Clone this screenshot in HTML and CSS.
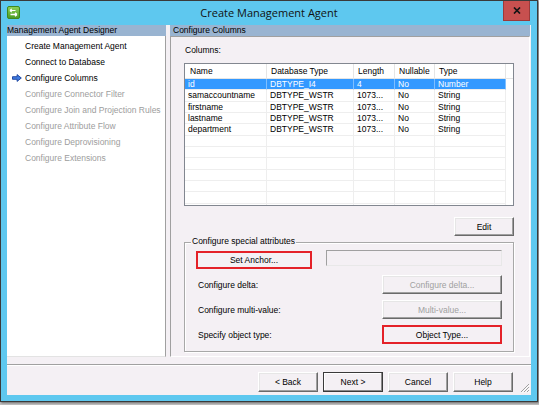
FILE: index.html
```html
<!DOCTYPE html>
<html>
<head>
<meta charset="utf-8">
<title>Create Management Agent</title>
<link rel="stylesheet" href="styles.css">
</head>
<body>
<div class="window">
  <div class="titlebar">
    <svg class="app-icon" width="13" height="13" viewBox="0 0 13 13">
      <defs><linearGradient id="ag" x1="0" y1="0" x2="0" y2="1"><stop offset="0" stop-color="#8fd35c"/><stop offset="1" stop-color="#4a9a23"/></linearGradient></defs>
      <rect x=".5" y=".5" width="12" height="12" rx="1.5" fill="url(#ag)" stroke="#3f8a1e"/>
      <path d="M3 4.5h5.5M3 4.5l1.8-1.6M3 4.5l1.8 1.6" stroke="#fff" stroke-width="1.2" fill="none"/>
      <path d="M3.5 8.5h6.5M10 8.5l-2-1.8M10 8.5l-2 1.8" stroke="#fff" stroke-width="1.4" fill="none"/>
    </svg>
    <div class="title">Create Management Agent</div>
    <div class="close">
      <svg width="8" height="7" viewBox="0 0 8 7"><path d="M1 .5l6 6M7 .5l-6 6" stroke="#141414" stroke-width="1.7"/></svg>
    </div>
  </div>
  <div class="client">
    <div class="main">
      <div class="left">
        <div class="band">Management Agent Designer</div>
        <ul class="steps">
          <li class="step"><span class="marker"></span>Create Management Agent</li>
          <li class="step"><span class="marker"></span>Connect to Database</li>
          <li class="step"><span class="marker"><svg width="10" height="8" viewBox="0 0 10 8"><path d="M.5 2.7h4.6V.6L9.3 4 5.1 7.4V5.3H.5z" fill="#3f7be0" stroke="#173f9b" stroke-width=".9"/></svg></span>Configure Columns</li>
          <li class="step disabled"><span class="marker"></span>Configure Connector Filter</li>
          <li class="step disabled"><span class="marker"></span>Configure Join and Projection Rules</li>
          <li class="step disabled"><span class="marker"></span>Configure Attribute Flow</li>
          <li class="step disabled"><span class="marker"></span>Configure Deprovisioning</li>
          <li class="step disabled"><span class="marker"></span>Configure Extensions</li>
        </ul>
      </div>
      <div class="right">
        <div class="band band-right">Configure Columns</div>
        <div class="page">
          <div class="label">Columns:</div>
          <div class="listview">
            <div class="lv-head">
              <div class="hc hc-first">Name</div>
              <div class="hc">Database Type</div>
              <div class="hc">Length</div>
              <div class="hc">Nullable</div>
              <div class="hc">Type</div>
              <div class="hc hc-fill"></div>
            </div>
            <div class="lv-body">
              <div class="lv-row selected"><div class="c">id</div><div class="c">DBTYPE_I4</div><div class="c">4</div><div class="c">No</div><div class="c">Number</div></div>
              <div class="lv-row"><div class="c">samaccountname</div><div class="c">DBTYPE_WSTR</div><div class="c">1073...</div><div class="c">No</div><div class="c">String</div></div>
              <div class="lv-row"><div class="c">firstname</div><div class="c">DBTYPE_WSTR</div><div class="c">1073...</div><div class="c">No</div><div class="c">String</div></div>
              <div class="lv-row"><div class="c">lastname</div><div class="c">DBTYPE_WSTR</div><div class="c">1073...</div><div class="c">No</div><div class="c">String</div></div>
              <div class="lv-row"><div class="c">department</div><div class="c">DBTYPE_WSTR</div><div class="c">1073...</div><div class="c">No</div><div class="c">String</div></div>
              <div class="lv-row"><div class="c"></div><div class="c"></div><div class="c"></div><div class="c"></div><div class="c"></div></div>
              <div class="lv-row"><div class="c"></div><div class="c"></div><div class="c"></div><div class="c"></div><div class="c"></div></div>
              <div class="lv-row"><div class="c"></div><div class="c"></div><div class="c"></div><div class="c"></div><div class="c"></div></div>
              <div class="lv-row"><div class="c"></div><div class="c"></div><div class="c"></div><div class="c"></div><div class="c"></div></div>
              <div class="lv-row"><div class="c"></div><div class="c"></div><div class="c"></div><div class="c"></div><div class="c"></div></div>
              <div class="lv-row"><div class="c"></div><div class="c"></div><div class="c"></div><div class="c"></div><div class="c"></div></div>
              <div class="lv-row"><div class="c"></div><div class="c"></div><div class="c"></div><div class="c"></div><div class="c"></div></div>
            </div>
          </div>
          <div class="edit-row"><button class="btn btn-edit">Edit</button></div>
          <div class="group">
            <div class="group-caption">Configure special attributes</div>
            <div class="grow">
              <button class="btn btn-red btn-anchor">Set Anchor...</button>
              <div class="textbox"></div>
            </div>
            <div class="grow">
              <span class="glabel">Configure delta:</span>
              <button class="btn btn-side" disabled>Configure delta...</button>
            </div>
            <div class="grow">
              <span class="glabel">Configure multi-value:</span>
              <button class="btn btn-side" disabled>Multi-value...</button>
            </div>
            <div class="grow">
              <span class="glabel">Specify object type:</span>
              <button class="btn btn-side btn-red">Object Type...</button>
            </div>
          </div>
        </div>
      </div>
    </div>
    <div class="separator"></div>
    <div class="footer">
      <button class="btn btn-foot">&lt; Back</button>
      <button class="btn btn-foot btn-default">Next &gt;</button>
      <button class="btn btn-foot">Cancel</button>
      <button class="btn btn-foot">Help</button>
    </div>
    <svg class="grip" width="11" height="11" viewBox="0 0 11 11">
      <path d="M10 2L2 10M10 5L5 10M10 8L8 10" stroke="#a0a0a0" stroke-width="1"/>
      <path d="M10.8 2.8L2.8 10.8M10.8 5.8L5.8 10.8M10.8 8.8L8.8 10.8" stroke="#ffffff" stroke-width="1"/>
    </svg>
  </div>
</div>
</body>
</html>
```

FILE: styles.css
```css
* { box-sizing: border-box; margin: 0; padding: 0; }
html, body { width: 539px; height: 405px; overflow: hidden; }
body {
  background: #c2c2c2;
  font-family: "Liberation Sans", Arial, sans-serif;
  font-size: 8.5px;
  color: #000;
}
.window {
  width: 538px;
  height: 402px;
  background: #5ec8ef;
  border: 1px solid #3a3a3a;
  box-shadow: 1px 1px 2px rgba(0, 0, 0, .45);
  padding: 0 6px 6px 6px;
  display: flex;
  flex-direction: column;
}
.titlebar {
  height: 24px;
  display: grid;
  grid-template-columns: 1fr auto 1fr;
  align-items: start;
}
.app-icon { margin-top: 5px; justify-self: start; display: block; }
.title {
  font-family: "Open Sans", "Noto Sans", sans-serif;
  font-size: 11px;
  line-height: 24px;
  color: #111;
  white-space: nowrap;
}
.close {
  justify-self: end;
  margin-right: 1px;
  width: 27px;
  height: 20px;
  background: #c7504f;
  border: 1px solid #9c3a3a;
  border-top: 0;
  display: flex;
  align-items: center;
  justify-content: center;
}
.close svg { display: block; }
.client {
  height: 370px;
  background: #f4f0f4;
  position: relative;
  display: flex;
  flex-direction: column;
}
.main {
  height: 332px;
  display: flex;
  gap: 4px;
  padding-right: 1px;
}
.left { width: 159px; display: flex; flex-direction: column; }
.right { width: 360px; display: flex; flex-direction: column; }
.band {
  height: 11px;
  line-height: 11px;
  background: #99b4d1;
  white-space: nowrap;
}
.band-right { padding-left: 3px; }
.steps {
  flex: 1;
  background: #fff;
  border-right: 1px solid #a0a0a0;
  border-bottom: 1px solid #e3e3e3;
  list-style: none;
  padding-top: 2px;
}
.step {
  height: 16px;
  display: flex;
  align-items: center;
  padding-left: 5px;
  white-space: nowrap;
}
.step.disabled { color: #9d9d9d; }
.marker { width: 13px; display: flex; align-items: center; }
.marker svg { display: block; }
.page {
  flex: 1;
  border: 1px solid;
  border-color: #a0a0a0 #fff #fff #a0a0a0;
  padding: 0 15px 0 13px;
  display: flex;
  flex-direction: column;
}
.label { margin-top: 7px; line-height: 12px; padding-left: 1px; }
.listview {
  margin-top: 7px;
  height: 143px;
  border: 1px solid #828790;
  background: #fff;
  overflow: hidden;
}
.lv-head {
  display: grid;
  grid-template-columns: 82px 87px 41px 40px 71px 1fr;
  height: 15px;
  border-bottom: 1px solid #e5e5e5;
}
.hc {
  border-right: 1px solid #e5e5e5;
  padding-left: 4px;
  line-height: 14px;
  white-space: nowrap;
  overflow: hidden;
}
.hc-first { padding-left: 5px; }
.hc-fill { border-right: 0; }
.lv-row {
  display: grid;
  grid-template-columns: 82px 87px 41px 40px 71px;
  height: 11.33px;
}
.c {
  border-right: 1px solid #eeeeee;
  border-bottom: 1px solid #eeeeee;
  padding-left: 3px;
  line-height: 10.33px;
  white-space: nowrap;
  overflow: hidden;
}
.lv-row.selected .c {
  background: #3399ff;
  color: #fff;
  border-right-color: #7fbfff;
}
.btn {
  font-family: inherit;
  font-size: 8.5px;
  color: #000;
  background: #f4f0f4;
  border: 1px solid;
  border-color: #fff #6a6a6a #6a6a6a #fff;
  box-shadow: inset -1px -1px 0 #a0a0a0, inset 1px 1px 0 #e6e6e6;
  text-align: center;
  white-space: nowrap;
}
.btn:disabled { color: #a0a0a0; }
.btn-red {
  border: 2px solid #e42128;
  box-shadow: none;
}
.edit-row { margin-top: 11px; display: flex; justify-content: flex-end; }
.btn-edit { width: 60px; height: 19px; }
.group {
  margin-top: 6px;
  height: 110px;
  position: relative;
  border: 1px solid #a8a8a8;
  box-shadow: inset 1px 1px 0 #fff, 1px 1px 0 #fff;
  padding: 7px 11px 0 11px;
  display: flex;
  flex-direction: column;
  gap: 6px;
}
.group-caption {
  position: absolute;
  left: 6px;
  top: -7px;
  padding: 0 1px;
  line-height: 11px;
  background: #f4f0f4;
  white-space: nowrap;
}
.grow {
  height: 19px;
  display: flex;
  align-items: center;
  justify-content: space-between;
}
.btn-anchor { width: 116px; height: 18px; }
.textbox {
  width: 176px;
  height: 16px;
  align-self: flex-start;
  border: 1px solid;
  border-color: #a0a0a0 #e8e8e8 #e8e8e8 #a0a0a0;
  background: #f4f0f4;
}
.glabel { padding-left: 2px; white-space: nowrap; }
.btn-side { width: 120px; height: 19px; }
.separator {
  margin-top: 7px;
  height: 2px;
  border-top: 1px solid #a0a0a0;
  border-bottom: 1px solid #fff;
}
.footer {
  flex: 1;
  display: flex;
  justify-content: flex-end;
  align-items: flex-start;
  gap: 5px;
  padding: 6px 18px 0 0;
}
.btn-foot { width: 60px; height: 20px; }
.btn-default {
  border: 1px solid #3a3a3a;
  box-shadow: inset -1px -1px 0 #8a8a8a, inset 1px 1px 0 #fff;
}
.grip { position: absolute; right: 1px; bottom: 2px; display: block; }
```
